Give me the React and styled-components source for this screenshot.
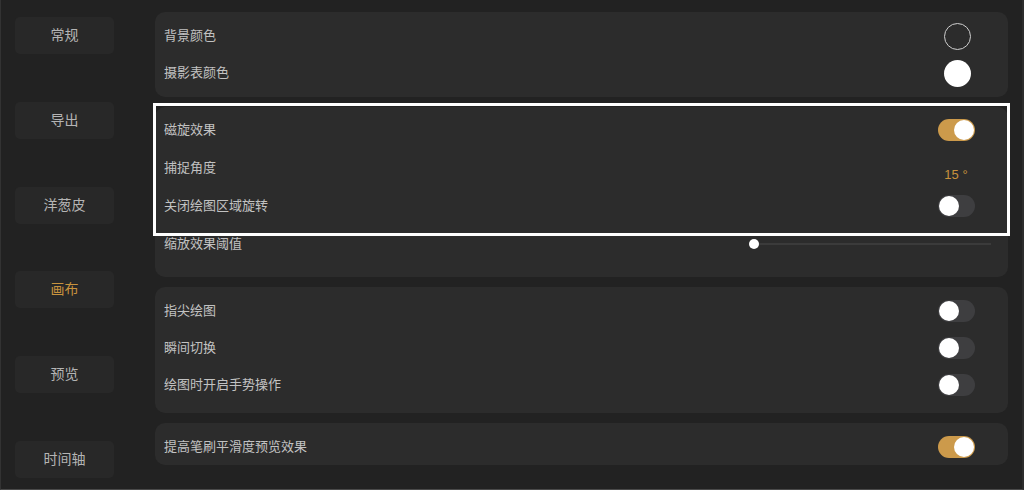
import styled, { createGlobalStyle } from "styled-components";

const GlobalStyle = createGlobalStyle`
  html, body {
    margin: 0;
    padding: 0;
    background: #222222;
    overflow: hidden;
  }
  * {
    box-sizing: border-box;
  }
`;

const Frame = styled.div`
  display: flex;
  width: 1024px;
  height: 490px;
  background: #222222;
  border-left: 1px solid #333333;
  border-right: 2px solid #2c2c2c;
  border-bottom: 1px solid #4a4a4a;
  font-family: "Noto Sans CJK SC", "Noto Sans", sans-serif;
`;

const Sidebar = styled.nav`
  display: flex;
  flex-direction: column;
  gap: 47.8px;
  width: 154px;
  padding: 17px 0 0 14px;
`;

const NavButton = styled.div`
  display: flex;
  align-items: center;
  justify-content: center;
  width: 99px;
  height: 37px;
  padding-bottom: 3px;
  border-radius: 5px;
  background: #282828;
  color: ${(p) => (p.$active ? "#c8933e" : "#b4b4b4")};
  font-size: 14px;
`;

const Main = styled.main`
  display: flex;
  flex-direction: column;
  gap: 10px;
  width: 853px;
  padding-top: 12px;
`;

const Panel = styled.section`
  position: relative;
  display: flex;
  flex-direction: column;
  padding: ${(p) => p.$pad};
  border-radius: 10px;
  background: #2c2c2c;
`;

const Row = styled.div`
  display: flex;
  align-items: center;
  justify-content: space-between;
  height: ${(p) => p.$h || 37}px;
  padding: 0 32px 0 9px;
`;

const Label = styled.span`
  color: #c2c2c2;
  font-size: 13px;
  padding-bottom: 3px;
`;

const Slot = styled.div`
  display: flex;
  align-items: center;
  justify-content: center;
  width: 40px;
`;

const Swatch = styled.div`
  width: 27px;
  height: 27px;
  border-radius: 50%;
  background: ${(p) => (p.$filled ? "#ffffff" : "transparent")};
  border: ${(p) => (p.$filled ? "none" : "1.5px solid #cfcfcf")};
  margin-left: 2px;
`;

const Track = styled.div`
  display: flex;
  justify-content: ${(p) => (p.$on ? "flex-end" : "flex-start")};
  align-items: center;
  width: 37px;
  height: 22px;
  padding: 1px;
  border-radius: 11px;
  background: ${(p) => (p.$on ? "#cc9a4b" : "#3e3e40")};
`;

const Knob = styled.div`
  width: 20px;
  height: 20px;
  border-radius: 50%;
  background: #ffffff;
`;

const Value = styled.span`
  padding-top: 12px;
  color: #c8913c;
  font-family: "Liberation Sans", Arial, sans-serif;
  font-size: 13px;
`;

const SliderRow = styled(Row)`
  padding-right: 17px;
`;

const Slider = styled.div`
  position: relative;
  width: 242px;
  height: 10px;
  display: flex;
  align-items: center;
`;

const SliderLine = styled.div`
  width: 100%;
  height: 2px;
  background: #3b3b3b;
`;

const Thumb = styled.div`
  position: absolute;
  left: 0;
  top: 0;
  width: 10px;
  height: 10px;
  border-radius: 50%;
  background: #ffffff;
`;

const Highlight = styled.div`
  position: absolute;
  left: -2px;
  right: -2px;
  top: -4px;
  height: 133px;
  border: 3px solid #ffffff;
  pointer-events: none;
`;

const Toggle = ({ on }) => (
  <Track $on={on}>
    <Knob />
  </Track>
);

const navItems = ["常规", "导出", "洋葱皮", "画布", "预览", "时间轴"];

export default function App() {
  return (
    <>
      <GlobalStyle />
      <Frame>
        <Sidebar>
          {navItems.map((name) => (
            <NavButton key={name} $active={name === "画布"}>
              {name}
            </NavButton>
          ))}
        </Sidebar>
        <Main>
          <Panel $pad="5.5px 0">
            <Row>
              <Label>背景颜色</Label>
              <Slot>
                <Swatch />
              </Slot>
            </Row>
            <Row>
              <Label>摄影表颜色</Label>
              <Slot>
                <Swatch $filled />
              </Slot>
            </Row>
          </Panel>

          <Panel $pad="4px 0 14px">
            <Row $h={38}>
              <Label>磁旋效果</Label>
              <Slot>
                <Toggle on />
              </Slot>
            </Row>
            <Row $h={38}>
              <Label>捕捉角度</Label>
              <Slot>
                <Value>15 °</Value>
              </Slot>
            </Row>
            <Row $h={38}>
              <Label>关闭绘图区域旋转</Label>
              <Slot>
                <Toggle />
              </Slot>
            </Row>
            <SliderRow $h={38}>
              <Label>缩放效果阈值</Label>
              <Slider>
                <SliderLine />
                <Thumb />
              </Slider>
            </SliderRow>
            <Highlight />
          </Panel>

          <Panel $pad="5px 0 10px">
            <Row>
              <Label>指尖绘图</Label>
              <Slot>
                <Toggle />
              </Slot>
            </Row>
            <Row>
              <Label>瞬间切换</Label>
              <Slot>
                <Toggle />
              </Slot>
            </Row>
            <Row>
              <Label>绘图时开启手势操作</Label>
              <Slot>
                <Toggle />
              </Slot>
            </Row>
          </Panel>

          <Panel $pad="5px 0 0">
            <Row>
              <Label>提高笔刷平滑度预览效果</Label>
              <Slot>
                <Toggle on />
              </Slot>
            </Row>
          </Panel>
        </Main>
      </Frame>
    </>
  );
}
